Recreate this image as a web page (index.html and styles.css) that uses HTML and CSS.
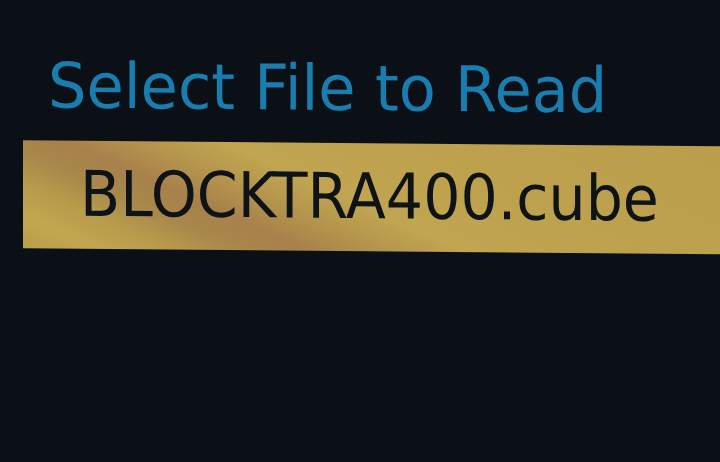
FILE: index.html
```html
<!DOCTYPE html>
<html>
<head>
<meta charset="utf-8">
<link rel="stylesheet" href="styles.css">
</head>
<body>
<main class="screen">
  <h1 class="title"><span class="title-text">Select File to Read</span></h1>
  <div class="file-bar">
    <span class="file-name">BLOCKTRA400.cube</span>
  </div>
</main>
</body>
</html>
```
FILE: styles.css
```css
html, body {
  margin: 0;
  padding: 0;
  background: #0a1016;
  width: 720px;
  height: 462px;
  overflow: hidden;
}
.screen {
  display: flex;
  flex-direction: column;
  padding-top: 56px;
  transform: skewY(0.5deg);
  transform-origin: 0 0;
  font-family: "DejaVu Sans", Verdana, sans-serif;
}
.title {
  margin: 0 0 24px 48px;
  font-size: 63px;
  line-height: 60px;
  font-weight: normal;
  color: #1a7db0;
  white-space: nowrap;
}
.title-text {
  display: inline-block;
  transform: scaleX(0.962);
  transform-origin: 0 50%;
}
.file-bar {
  margin-left: 23px;
  height: 108px;
  display: flex;
  align-items: center;
  padding-left: 57px;
  background: linear-gradient(24deg,
    #b99f4c 0%, #c2a64f 8%, #b89a4c 16%, #a8884b 23%, #a8804b 30%,
    #b4944c 38%, #c1a550 47%, #bea24e 60%, #ba9e4c 100%);
  white-space: nowrap;
}
.file-name {
  display: inline-block;
  font-size: 63px;
  line-height: 60px;
  color: #0e1318;
  transform: scaleX(0.93);
  transform-origin: 0 50%;
}
```
